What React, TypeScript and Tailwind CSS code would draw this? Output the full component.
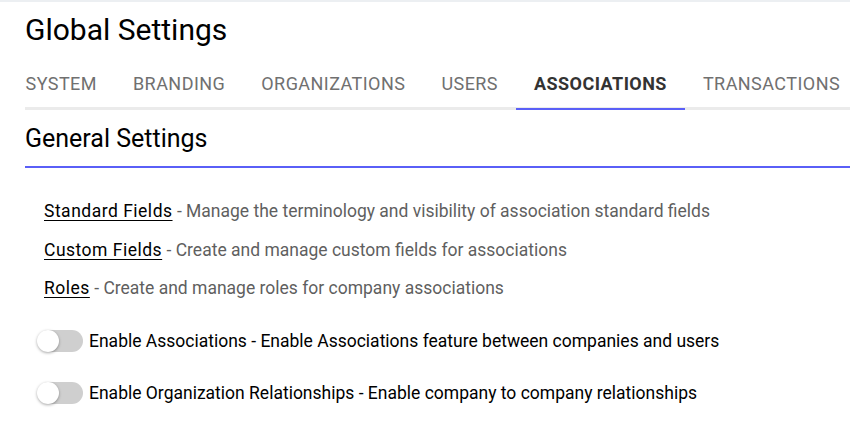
import React, { useState } from "react";

const TABS = ["System", "Branding", "Organizations", "Users", "Associations", "Transactions"];

const LINKS = [
  { label: "Standard Fields", desc: "Manage the terminology and visibility of association standard fields" },
  { label: "Custom Fields", desc: "Create and manage custom fields for associations" },
  { label: "Roles", desc: "Create and manage roles for company associations" },
];

const TOGGLES = [
  "Enable Associations - Enable Associations feature between companies and users",
  "Enable Organization Relationships - Enable company to company relationships",
];

function Toggle({ on, onChange }: { on: boolean; onChange: () => void }) {
  return (
    <button
      onClick={onChange}
      className={`relative w-[45px] h-[22px] rounded-full shrink-0 ${on ? "bg-[#aeb1fb]" : "bg-[#cfcfcf]"}`}
    >
      <span
        className={`absolute top-[0px] w-[22px] h-[22px] rounded-full bg-white shadow-[0_1px_3px_rgba(0,0,0,0.35)] ${on ? "left-[23px] bg-[#5a60f6]" : "left-[-1px]"}`}
      />
    </button>
  );
}

export default function App() {
  const [active, setActive] = useState(4);
  const [toggles, setToggles] = useState([false, false]);

  return (
    <div className="w-[850px] h-[424px] bg-white border-t-2 border-[#eceff2] overflow-hidden font-['Roboto',sans-serif]">
      <div className="pl-[25px]">
        <h1 className="mt-[10px] text-[30px] leading-[36px] font-normal text-black">Global Settings</h1>

        {/* Tabs */}
        <div className="mt-[24px] border-b-[3px] border-[#ebebeb]">
          <div className="flex -ml-[17.5px]">
            {TABS.map((t, i) => (
              <button
                key={t}
                onClick={() => setActive(i)}
                className={`relative px-[18px] pb-[11px] text-[18px] leading-[24px] tracking-[0.45px] uppercase ${
                  i === active ? "font-bold text-[#333333]" : "text-[#707070]"
                }`}
              >
                {t}
                {i === active && <span className="absolute left-0 right-0 bottom-[-3px] h-[2px] bg-[#5a5ff7]" />}
              </button>
            ))}
          </div>
        </div>

        {/* General Settings */}
        <div className="mt-[14px] pb-[12px] border-b-2 border-[#5a5ff7]">
          <h2 className="text-[25px] leading-[30px] font-normal text-black">General Settings</h2>
        </div>

        <div className="pt-[24px] pl-[19px] text-[17.5px]">
          {LINKS.map((l) => (
            <div key={l.label} className="leading-[38.5px] text-[#5f5f5f]">
              <a href="#" className="text-black tracking-[0.5px] underline underline-offset-[3px]">
                {l.label}
              </a>{" "}
              - {l.desc}
            </div>
          ))}
        </div>

        <div className="mt-[7px] pl-[13px]">
          {TOGGLES.map((label, i) => (
            <div key={label} className="flex items-center h-[52px] gap-[6px]">
              <Toggle
                on={toggles[i]}
                onChange={() => setToggles((s) => s.map((v, j) => (j === i ? !v : v)))}
              />
              <span className="text-[17.5px] leading-[24px] text-black">{label}</span>
            </div>
          ))}
        </div>
      </div>
    </div>
  );
}
